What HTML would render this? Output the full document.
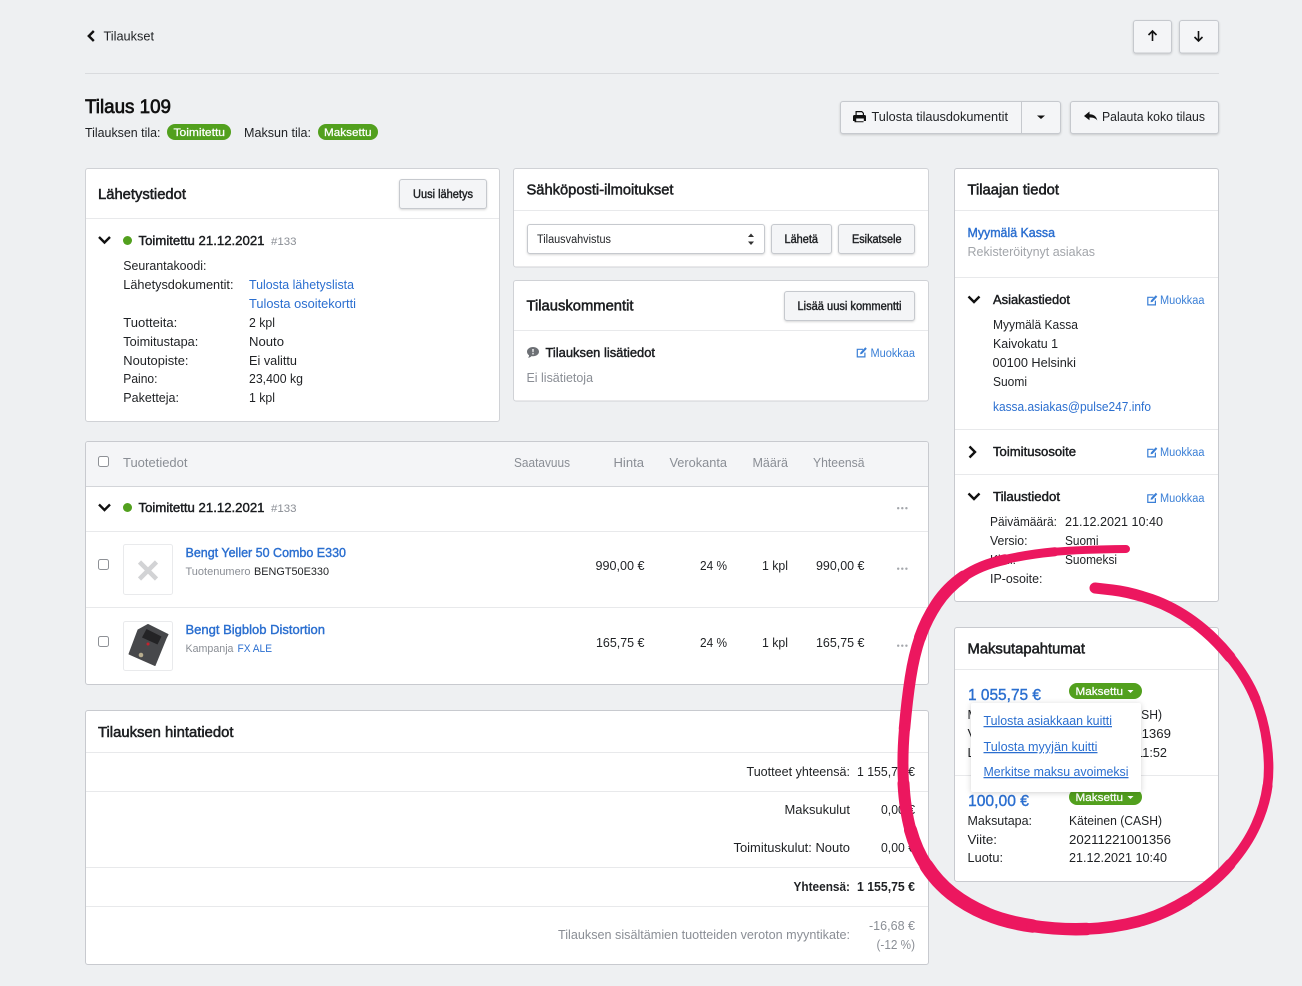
<!DOCTYPE html>
<html lang="fi"><head><meta charset="utf-8"><title>Tilaus 109</title>
<style>
html,body{margin:0;padding:0;background:#eef0f2;overflow:hidden}
svg{display:block;font-family:"Liberation Sans",sans-serif;font-size:12.5px;fill:#1f2124}
.c{fill:#fff;stroke:#d0d2d6}
.b{fill:#f4f5f7;stroke:#c6c9ce;filter:drop-shadow(0 1px 1px rgba(0,0,0,.16))}
.l{stroke:#e8e9eb;stroke-width:1}
.m{stroke:#1a1c1f;stroke-width:.42;fill:#1a1c1f}
.h{font-size:14.5px;stroke:#16181a;stroke-width:.5}
.s{font-size:11.5px;stroke:#1a1c1f;stroke-width:.4}
.a{fill:#2b6fd0}
.am{fill:#2b6fd0;stroke:#2b6fd0;stroke-width:.4}
.e{fill:#3a7fd6;font-size:11.5px}
.g{fill:#8a8e95}
.w{fill:#fff;font-size:11px;stroke:#fff;stroke-width:.25}
.n{font-size:11px}
.u{text-decoration:underline}
.k{fill:#fff;stroke:#8e9196;stroke-width:1}
.ch{fill:none;stroke:#111;stroke-width:2.4}
.d{fill:#a3a6ab}
</style></head><body>
<svg width="1302" height="986" viewBox="0 0 1302 986" xmlns="http://www.w3.org/2000/svg">
<defs>
<g id="ed" fill="none" stroke="#3a7fd6" stroke-width="1.2"><path d="M6.5 2.3H.8v7.6h7.6V5.6"/><path d="M3.6 7.300l.3-1.800L8.800.3l1.500 1.500-4.900 5.200z" fill="#3a7fd6" stroke="none"/></g>
<g id="dots" class="d"><circle cx="1.2" cy="1.2" r="1.2"/><circle cx="5.3" cy="1.2" r="1.2"/><circle cx="9.4" cy="1.2" r="1.2"/></g>
</defs>
<rect width="1302" height="986" fill="#eef0f2"/>
<line x1="85" y1="73.5" x2="1219" y2="73.5" stroke="#d9dbde"/>

<!-- top -->
<path d="M93.800 31l-5 5 5 5" fill="none" stroke="#111" stroke-width="2.400"/>
<text x="103.5" y="40.5" textLength="50.5" lengthAdjust="spacingAndGlyphs">Tilaukset</text>
<text x="85" y="113" textLength="86" lengthAdjust="spacingAndGlyphs" font-size="19.5" style="stroke:#111;stroke-width:.7;fill:#111">Tilaus 109</text>
<text x="85" y="137" textLength="75.5" lengthAdjust="spacingAndGlyphs">Tilauksen tila:</text>
<rect x="167" y="124" width="64" height="16" rx="8" fill="#52a01e"/>
<text class="w" x="173.5" y="136" textLength="51.5" lengthAdjust="spacingAndGlyphs">Toimitettu</text>
<text x="244" y="137" textLength="67" lengthAdjust="spacingAndGlyphs">Maksun tila:</text>
<rect x="318" y="124" width="60" height="16" rx="8" fill="#52a01e"/>
<text class="w" x="324" y="136" textLength="47.5" lengthAdjust="spacingAndGlyphs">Maksettu</text>

<rect class="b" x="1133.5" y="20.5" width="38" height="32.5" rx="2.5"/>
<rect class="b" x="1179.5" y="20.5" width="39" height="32.5" rx="2.5"/>
<path d="M1152.5 41V31.5M1148.5 35l4-4 4 4" fill="none" stroke="#111" stroke-width="1.6"/>
<path d="M1198.5 31v9.5M1194.5 37l4 4 4-4" fill="none" stroke="#111" stroke-width="1.6"/>

<rect class="b" x="840.5" y="101.5" width="220" height="32" rx="2.5"/>
<line x1="1021.5" y1="102" x2="1021.5" y2="133" stroke="#c6c9ce"/>
<path d="M855.5 111h6.500l2 2v2h.5a1.500 1.500 0 0 1 1.500 1.500V121h-2.500v1.300h-9V121H853v-4.500a1.500 1.500 0 0 1 1.500-1.500h1zM856.700 112.200v2.800h6.100v-1.600l-1.200-1.200zM856.200 118.500v2.700h7.600v-2.700z" fill="#111" fill-rule="evenodd"/>
<text x="871.500" y="121" textLength="136.500" lengthAdjust="spacingAndGlyphs">Tulosta tilausdokumentit</text>
<path d="M1037 115.500h8l-4 3.500z" fill="#111"/>
<rect class="b" x="1070.500" y="101.500" width="148" height="32" rx="2.500"/>
<path d="M1084 116l5.500-4.500v2.700c4 0 7 2 7.800 6.300-1.800-2.500-4.300-3-7.800-3v2.700z" fill="#111"/>
<text x="1102" y="121" textLength="103" lengthAdjust="spacingAndGlyphs">Palauta koko tilaus</text>

<!-- Lähetystiedot -->
<rect class="c" x="85.500" y="168.500" width="414" height="253" rx="2.500"/>
<line class="l" x1="86" y1="218.500" x2="499" y2="218.500"/>
<text class="h" x="98" y="199" textLength="88" lengthAdjust="spacingAndGlyphs">Lähetystiedot</text>
<rect class="b" x="399.500" y="179.500" width="87" height="29" rx="2.500"/>
<text class="s" x="413" y="198" textLength="60" lengthAdjust="spacingAndGlyphs">Uusi lähetys</text>
<path class="ch" d="M99 237l5.500 5.500 5.500-5.500"/>
<circle cx="127.500" cy="240.500" r="4.500" fill="#52a01e"/>
<text class="m" x="138.500" y="245" textLength="126" lengthAdjust="spacingAndGlyphs">Toimitettu 21.12.2021</text>
<text class="g n" x="271" y="245" textLength="25.500" lengthAdjust="spacingAndGlyphs">#133</text>
<text x="123.300" y="270" textLength="83.200" lengthAdjust="spacingAndGlyphs">Seurantakoodi:</text>
<text x="123.300" y="289" textLength="110.200" lengthAdjust="spacingAndGlyphs">Lähetysdokumentit:</text>
<text class="a" x="249" y="289" textLength="105" lengthAdjust="spacingAndGlyphs">Tulosta lähetyslista</text>
<text class="a" x="249" y="308" textLength="107" lengthAdjust="spacingAndGlyphs">Tulosta osoitekortti</text>
<text x="123.300" y="327" textLength="54" lengthAdjust="spacingAndGlyphs">Tuotteita:</text>
<text x="249" y="327" textLength="26" lengthAdjust="spacingAndGlyphs">2 kpl</text>
<text x="123.300" y="346" textLength="75" lengthAdjust="spacingAndGlyphs">Toimitustapa:</text>
<text x="249" y="346" textLength="35" lengthAdjust="spacingAndGlyphs">Nouto</text>
<text x="123.300" y="365" textLength="65.200" lengthAdjust="spacingAndGlyphs">Noutopiste:</text>
<text x="249" y="365" textLength="48" lengthAdjust="spacingAndGlyphs">Ei valittu</text>
<text x="123.300" y="383" textLength="34.200" lengthAdjust="spacingAndGlyphs">Paino:</text>
<text x="249" y="383" textLength="54" lengthAdjust="spacingAndGlyphs">23,400 kg</text>
<text x="123.300" y="402" textLength="55.700" lengthAdjust="spacingAndGlyphs">Paketteja:</text>
<text x="249" y="402" textLength="26" lengthAdjust="spacingAndGlyphs">1 kpl</text>

<!-- Sähköposti -->
<rect class="c" x="513.500" y="168.500" width="415" height="98.500" rx="2.500"/>
<line class="l" x1="514" y1="210.500" x2="928" y2="210.500"/>
<text class="h" x="526.500" y="194.500" textLength="147" lengthAdjust="spacingAndGlyphs">Sähköposti-ilmoitukset</text>
<rect x="527.500" y="224.500" width="237" height="29" rx="2.500" fill="#fff" stroke="#c6c9ce" style="filter:drop-shadow(0 1px 1px rgba(0,0,0,.16))"/>
<text font-size="11.500" x="537" y="243" textLength="74" lengthAdjust="spacingAndGlyphs">Tilausvahvistus</text>
<path d="M751 233.500l3 3.500h-6zM751 245l3-3.500h-6z" fill="#333"/>
<rect class="b" x="771.500" y="224.500" width="60" height="29" rx="2.500"/>
<text class="s" x="784.500" y="243" textLength="33.500" lengthAdjust="spacingAndGlyphs">Lähetä</text>
<rect class="b" x="838.500" y="224.500" width="76" height="29" rx="2.500"/>
<text class="s" x="852" y="243" textLength="49.500" lengthAdjust="spacingAndGlyphs">Esikatsele</text>

<!-- Tilauskommentit -->
<rect class="c" x="513.500" y="280.500" width="415" height="120.500" rx="2.500"/>
<line class="l" x1="514" y1="330.500" x2="928" y2="330.500"/>
<text class="h" x="526.500" y="310.500" textLength="107" lengthAdjust="spacingAndGlyphs">Tilauskommentit</text>
<rect class="b" x="784.500" y="291.500" width="130" height="29" rx="2.500"/>
<text class="s" x="797.500" y="310" textLength="104" lengthAdjust="spacingAndGlyphs">Lisää uusi kommentti</text>
<path d="M533 347c3.300 0 6 2 6 4.600s-2.700 4.600-6 4.600l-1.500-.1c-.8.9-2 1.500-3.500 1.700.7-.7 1-1.500 1.100-2.500-1.300-.8-2.100-2.200-2.100-3.700 0-2.600 2.700-4.600 6-4.600z" fill="#6d7075"/>
<path d="M532.300 349h1.400l-.2 3.300h-1zM532.300 353.100h1.400v1.300h-1.400z" fill="#fff"/>
<text class="m" x="545.500" y="357" textLength="109.500" lengthAdjust="spacingAndGlyphs">Tilauksen lisätiedot</text>
<use href="#ed" x="856.500" y="347"/>
<text class="e" x="870.500" y="357" textLength="44.500" lengthAdjust="spacingAndGlyphs">Muokkaa</text>
<text class="g" x="526.500" y="382" textLength="66.500" lengthAdjust="spacingAndGlyphs">Ei lisätietoja</text>

<!-- Tilaajan tiedot -->
<rect class="c" x="954.500" y="168.500" width="264" height="433" rx="2.500" style="stroke:#c8cacf"/>
<line class="l" x1="955" y1="210.500" x2="1218" y2="210.500"/>
<line class="l" x1="955" y1="277.500" x2="1218" y2="277.500"/>
<line class="l" x1="955" y1="429.500" x2="1218" y2="429.500"/>
<line class="l" x1="955" y1="474.500" x2="1218" y2="474.500"/>
<text class="h" x="967.500" y="194.500" textLength="91.500" lengthAdjust="spacingAndGlyphs">Tilaajan tiedot</text>
<text class="am" x="967.500" y="237" textLength="87.500" lengthAdjust="spacingAndGlyphs">Myymälä Kassa</text>
<text x="967.500" y="256" textLength="127.500" lengthAdjust="spacingAndGlyphs" style="fill:#a2a5aa">Rekisteröitynyt asiakas</text>
<path class="ch" d="M968.500 296.500l5.500 5.500 5.500-5.500"/>
<text class="m" x="993" y="304" textLength="77" lengthAdjust="spacingAndGlyphs">Asiakastiedot</text>
<use href="#ed" x="1147" y="295"/>
<text class="e" x="1160" y="304" textLength="44.500" lengthAdjust="spacingAndGlyphs">Muokkaa</text>
<text x="993" y="329" textLength="85" lengthAdjust="spacingAndGlyphs">Myymälä Kassa</text>
<text x="993" y="348" textLength="65" lengthAdjust="spacingAndGlyphs">Kaivokatu 1</text>
<text x="992.500" y="367" textLength="83.500" lengthAdjust="spacingAndGlyphs">00100 Helsinki</text>
<text x="993" y="386" textLength="34" lengthAdjust="spacingAndGlyphs">Suomi</text>
<text class="a" x="993" y="411" textLength="158" lengthAdjust="spacingAndGlyphs">kassa.asiakas@pulse247.info</text>
<path class="ch" d="M969.500 446.500l5.500 5.500-5.500 5.500"/>
<text class="m" x="993" y="456" textLength="83" lengthAdjust="spacingAndGlyphs">Toimitusosoite</text>
<use href="#ed" x="1147" y="447"/>
<text class="e" x="1160" y="456" textLength="44.500" lengthAdjust="spacingAndGlyphs">Muokkaa</text>
<path class="ch" d="M968.500 493.500l5.500 5.500 5.500-5.500"/>
<text class="m" x="993" y="501" textLength="67" lengthAdjust="spacingAndGlyphs">Tilaustiedot</text>
<use href="#ed" x="1147" y="492.500"/>
<text class="e" x="1160" y="502" textLength="44.500" lengthAdjust="spacingAndGlyphs">Muokkaa</text>
<text x="990" y="526" textLength="67" lengthAdjust="spacingAndGlyphs">Päivämäärä:</text>
<text x="1065" y="526" textLength="98" lengthAdjust="spacingAndGlyphs">21.12.2021 10:40</text>
<text x="990" y="545" textLength="37.500" lengthAdjust="spacingAndGlyphs">Versio:</text>
<text x="1065" y="545" textLength="33.500" lengthAdjust="spacingAndGlyphs">Suomi</text>
<text x="990" y="564" textLength="26" lengthAdjust="spacingAndGlyphs">Kieli:</text>
<text x="1065" y="564" textLength="52" lengthAdjust="spacingAndGlyphs">Suomeksi</text>
<text x="990" y="583" textLength="52.500" lengthAdjust="spacingAndGlyphs">IP-osoite:</text>

<!-- Maksutapahtumat -->
<rect class="c" x="954.500" y="627.500" width="264" height="254" rx="2.500" style="stroke:#c8cacf"/>
<line class="l" x1="955" y1="669.500" x2="1218" y2="669.500"/>
<line class="l" x1="955" y1="775.500" x2="1218" y2="775.500"/>
<text class="h" x="967.500" y="653.500" textLength="117.500" lengthAdjust="spacingAndGlyphs">Maksutapahtumat</text>
<text class="am" font-size="16" x="968" y="700" textLength="73" lengthAdjust="spacingAndGlyphs">1 055,75 €</text>
<rect x="1069" y="683" width="73" height="16" rx="8" fill="#52a01e"/>
<text class="w" x="1075.500" y="695" textLength="47.500" lengthAdjust="spacingAndGlyphs">Maksettu</text>
<path d="M1127.500 690h6l-3 3z" fill="#fff"/>
<text x="967.500" y="719" textLength="64.500" lengthAdjust="spacingAndGlyphs">Maksutapa:</text>
<text x="1069" y="719" textLength="93" lengthAdjust="spacingAndGlyphs">Käteinen (CASH)</text>
<text x="967.500" y="738" textLength="29.500" lengthAdjust="spacingAndGlyphs">Viite:</text>
<text x="1069" y="738" textLength="102" lengthAdjust="spacingAndGlyphs">20211221001369</text>
<text x="967.500" y="757" textLength="35.500" lengthAdjust="spacingAndGlyphs">Luotu:</text>
<text x="1069" y="757" textLength="98" lengthAdjust="spacingAndGlyphs">21.12.2021 11:52</text>
<text class="am" font-size="16" x="968" y="806" textLength="61" lengthAdjust="spacingAndGlyphs">100,00 €</text>
<rect x="1069" y="789" width="73" height="16" rx="8" fill="#52a01e"/>
<text class="w" x="1075.500" y="801" textLength="47.500" lengthAdjust="spacingAndGlyphs">Maksettu</text>
<path d="M1127.500 796h6l-3 3z" fill="#fff"/>
<text x="967.500" y="825" textLength="64.500" lengthAdjust="spacingAndGlyphs">Maksutapa:</text>
<text x="1069" y="825" textLength="93" lengthAdjust="spacingAndGlyphs">Käteinen (CASH)</text>
<text x="967.500" y="844" textLength="29.500" lengthAdjust="spacingAndGlyphs">Viite:</text>
<text x="1069" y="844" textLength="102" lengthAdjust="spacingAndGlyphs">20211221001356</text>
<text x="967.500" y="862" textLength="35.500" lengthAdjust="spacingAndGlyphs">Luotu:</text>
<text x="1069" y="862" textLength="98" lengthAdjust="spacingAndGlyphs">21.12.2021 10:40</text>
<rect x="971" y="703" width="170" height="89" rx="2" fill="#fff" style="filter:drop-shadow(0 1px 3px rgba(0,0,0,.18))"/>
<text class="a u" x="983.500" y="725" textLength="128.500" lengthAdjust="spacingAndGlyphs">Tulosta asiakkaan kuitti</text>
<text class="a u" x="983.500" y="751" textLength="114" lengthAdjust="spacingAndGlyphs">Tulosta myyjän kuitti</text>
<text class="a u" x="983.500" y="776" textLength="145" lengthAdjust="spacingAndGlyphs">Merkitse maksu avoimeksi</text>

<!-- Products -->
<rect class="c" x="85.500" y="441.500" width="843" height="243" rx="2.500" style="stroke:#c8cacf"/>
<path d="M86 486.500V444a2 2 0 0 1 2-2H926a2 2 0 0 1 2 2V486.500z" fill="#f4f5f7"/>
<line x1="86" y1="486.500" x2="928" y2="486.500" stroke="#d3d5d9"/>
<line class="l" x1="86" y1="531.500" x2="928" y2="531.500"/>
<line class="l" x1="86" y1="607.500" x2="928" y2="607.500"/>
<rect class="k" x="98.500" y="456.500" width="10" height="10" rx="2"/>
<text class="g" x="123" y="467" textLength="64.500" lengthAdjust="spacingAndGlyphs">Tuotetiedot</text>
<text class="g" x="514" y="467" textLength="56" lengthAdjust="spacingAndGlyphs">Saatavuus</text>
<text class="g" x="613.500" y="467" textLength="30.500" lengthAdjust="spacingAndGlyphs">Hinta</text>
<text class="g" x="669.500" y="467" textLength="57.500" lengthAdjust="spacingAndGlyphs">Verokanta</text>
<text class="g" x="752.500" y="467" textLength="35.500" lengthAdjust="spacingAndGlyphs">Määrä</text>
<text class="g" x="813" y="467" textLength="51.500" lengthAdjust="spacingAndGlyphs">Yhteensä</text>
<path class="ch" d="M99 504.500l5.500 5.500 5.500-5.500"/>
<circle cx="127.500" cy="507.500" r="4.500" fill="#52a01e"/>
<text class="m" x="138.500" y="512" textLength="126" lengthAdjust="spacingAndGlyphs">Toimitettu 21.12.2021</text>
<text class="g n" x="271" y="512" textLength="25.500" lengthAdjust="spacingAndGlyphs">#133</text>
<use href="#dots" x="897" y="507"/>

<rect class="k" x="98.500" y="559.500" width="10" height="10" rx="2"/>
<rect x="123.500" y="544.500" width="49" height="50" rx="2" fill="#fff" stroke="#e9eaec"/>
<path d="M139.500 562l17 17M156.500 562l-17 17" stroke="#d2d3d5" stroke-width="4.500"/>
<text class="am" x="185.500" y="557" textLength="160.500" lengthAdjust="spacingAndGlyphs">Bengt Yeller 50 Combo E330</text>
<text class="g n" x="185.500" y="575" textLength="65" lengthAdjust="spacingAndGlyphs">Tuotenumero</text>
<text class="n" x="254" y="575" textLength="75" lengthAdjust="spacingAndGlyphs">BENGT50E330</text>
<text x="595.500" y="570" textLength="49" lengthAdjust="spacingAndGlyphs">990,00 €</text>
<text x="700" y="570" textLength="27" lengthAdjust="spacingAndGlyphs">24 %</text>
<text x="762" y="570" textLength="26" lengthAdjust="spacingAndGlyphs">1 kpl</text>
<text x="816" y="570" textLength="48.500" lengthAdjust="spacingAndGlyphs">990,00 €</text>
<use href="#dots" x="897" y="567.500"/>

<rect class="k" x="98.500" y="636.500" width="10" height="10" rx="2"/>
<rect x="123.500" y="621.500" width="49" height="49" rx="2" fill="#fff" stroke="#e9eaec"/>
<path d="M148 624.500l20 10-2 4-11 27-26-11.500 9-24z" fill="#47484b" stroke="#47484b" stroke-linejoin="round"/>
<path d="M146.500 629l15 7.500-4 8-15.500-7z" fill="#232325"/>
<circle cx="148" cy="644" r="1.500" fill="#c8202c"/>
<circle cx="141" cy="655" r="2.300" fill="#b8ad8e"/>
<text class="am" x="185.500" y="634" textLength="139.500" lengthAdjust="spacingAndGlyphs">Bengt Bigblob Distortion</text>
<text class="g n" x="185.500" y="652" textLength="48" lengthAdjust="spacingAndGlyphs">Kampanja</text>
<text class="a n" x="237.500" y="652" textLength="34.500" lengthAdjust="spacingAndGlyphs">FX ALE</text>
<text x="596" y="647" textLength="48.500" lengthAdjust="spacingAndGlyphs">165,75 €</text>
<text x="700" y="647" textLength="27" lengthAdjust="spacingAndGlyphs">24 %</text>
<text x="762" y="647" textLength="26" lengthAdjust="spacingAndGlyphs">1 kpl</text>
<text x="816" y="647" textLength="48.500" lengthAdjust="spacingAndGlyphs">165,75 €</text>
<use href="#dots" x="897" y="644.500"/>

<!-- Price -->
<rect class="c" x="85.500" y="710.500" width="843" height="254" rx="2.500" style="stroke:#c8cacf"/>
<line class="l" x1="86" y1="752.500" x2="928" y2="752.500"/>
<line class="l" x1="86" y1="791.500" x2="928" y2="791.500"/>
<line class="l" x1="86" y1="867.500" x2="928" y2="867.500"/>
<line class="l" x1="86" y1="906.500" x2="928" y2="906.500"/>
<text class="h" x="98" y="737" textLength="135.500" lengthAdjust="spacingAndGlyphs">Tilauksen hintatiedot</text>
<text x="746.500" y="776" textLength="103.500" lengthAdjust="spacingAndGlyphs">Tuotteet yhteensä:</text>
<text x="857" y="776" textLength="58" lengthAdjust="spacingAndGlyphs">1 155,75 €</text>
<text x="784.500" y="814" textLength="65.500" lengthAdjust="spacingAndGlyphs">Maksukulut</text>
<text x="881" y="814" textLength="34" lengthAdjust="spacingAndGlyphs">0,00 €</text>
<text x="733.500" y="852" textLength="116.500" lengthAdjust="spacingAndGlyphs">Toimituskulut: Nouto</text>
<text x="881" y="852" textLength="34" lengthAdjust="spacingAndGlyphs">0,00 €</text>
<text x="793.500" y="891" textLength="56.500" lengthAdjust="spacingAndGlyphs" font-weight="700" font-size="12.500">Yhteensä:</text>
<text x="857" y="891" textLength="58" lengthAdjust="spacingAndGlyphs" font-weight="700">1 155,75 €</text>
<text class="g" x="558" y="939" textLength="292" lengthAdjust="spacingAndGlyphs">Tilauksen sisältämien tuotteiden veroton myyntikate:</text>
<text class="g" x="869" y="930" textLength="46" lengthAdjust="spacingAndGlyphs">-16,68 €</text>
<text class="g" x="876.500" y="949" textLength="38.500" lengthAdjust="spacingAndGlyphs">(-12 %)</text>

<!-- Pink hand-drawn circle -->
<g fill="none" stroke="#ec175f" stroke-linecap="round" stroke-linejoin="round">
<path stroke-width="8" d="M1126 549Q1080 549.500 1055 551.750"/>
<path stroke-width="9" d="M1055 551.750Q1030 554 1005 559.500"/>
<path stroke-width="10.500" d="M1005 559.500Q980 565 963.500 576.500"/>
<path stroke-width="12" d="M963.500 576.500Q947 588 936.500 604Q926 620 920 637.500"/>
<path stroke-width="11.500" d="M920 637.500Q914 655 910.500 677.500Q907 700 904.500 728.500"/>
<path stroke-width="11" d="M904.500 728.500Q902 757 903.500 783.500"/>
<path stroke-width="12" d="M903.500 783.500Q905 810 910.500 830"/>
<path stroke-width="13" d="M910.500 830Q916 850 926.500 866"/>
<path stroke-width="14" d="M926.500 866Q937 882 951.500 893.500Q966 905 985.500 913.500"/>
<path stroke-width="13.500" d="M985.500 913.500Q1005 922 1032.500 926"/>
<path stroke-width="12.500" d="M1032.500 926Q1060 930 1086.500 929"/>
<path stroke-width="11.500" d="M1086.500 929Q1113 928 1138 921.500Q1163 915 1188 899.500"/>
<path stroke-width="11" d="M1188 899.500Q1213 884 1230 864.500"/>
<path stroke-width="10" d="M1230 864.500Q1247 845 1256 825Q1265 805 1267.500 786"/>
<path stroke-width="9.500" d="M1267.500 786Q1270 767 1267 743.500Q1264 720 1255.500 699"/>
<path stroke-width="10" d="M1255.500 699Q1247 678 1230 657"/>
<path stroke-width="11" d="M1230 657Q1213 636 1193 621.500Q1173 607 1151.500 599.500Q1130 592 1112.500 590L1095 588"/>
</g>
</svg>
</body></html>
